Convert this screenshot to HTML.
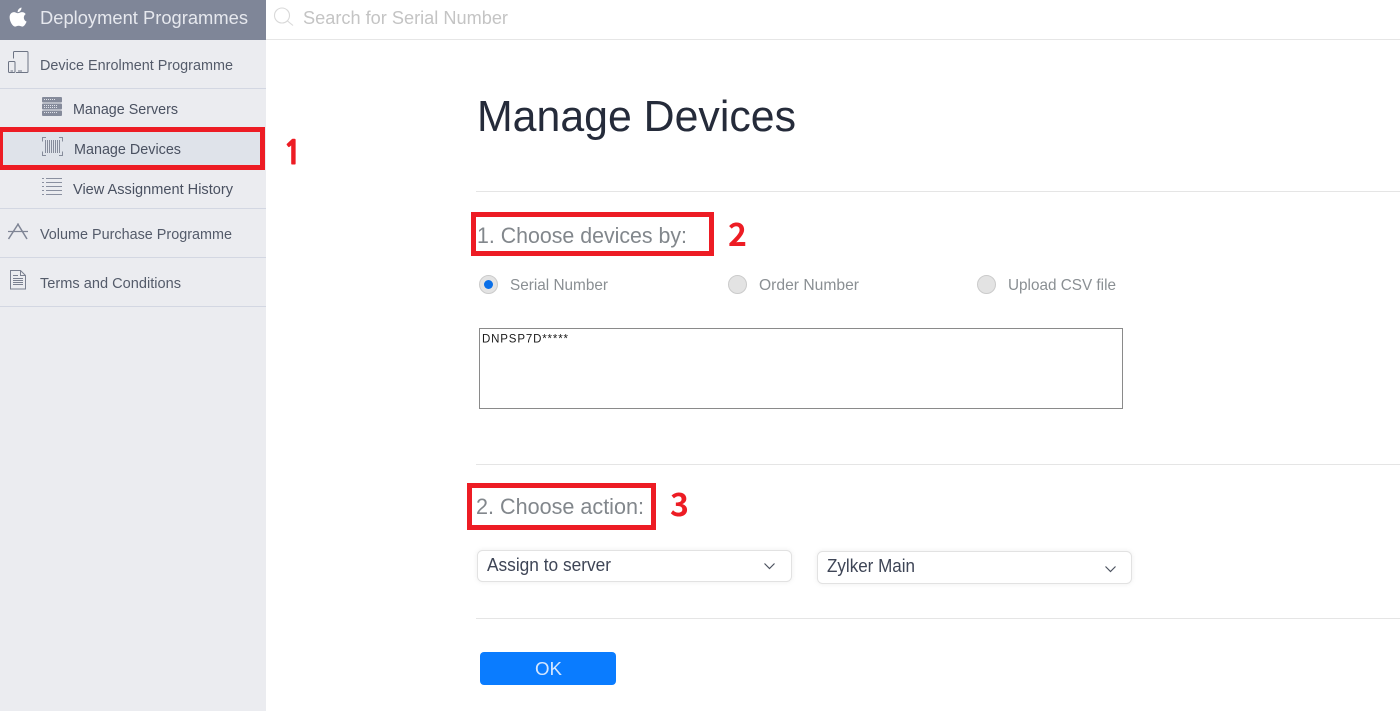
<!DOCTYPE html>
<html lang="en">
<head>
<meta charset="utf-8">
<title>Manage Devices</title>
<style>
html,body{margin:0;padding:0;background:#fff;width:1400px;height:711px;overflow:hidden}
svg{display:block}
text{font-family:"Liberation Sans",Arial,sans-serif;white-space:pre}
.nav{font-size:15px;fill:#545b6a}
.sub{font-size:15px;fill:#4a5161}
.h{font-size:22px;fill:#82878c}
.r{font-size:16px;fill:#8a8f93}
.sel{font-size:18px;fill:#3e4556}
.num{font-family:"Noto Sans CJK SC","Liberation Sans",sans-serif;font-weight:700;font-size:32px;fill:#ed1c24}
</style>
</head>
<body>
<svg width="1400" height="711" viewBox="0 0 1400 711" xmlns="http://www.w3.org/2000/svg">
<rect width="1400" height="711" fill="#fff"/>
<!-- sidebar -->
<rect x="0" y="0" width="266" height="711" fill="#ebecf0"/>
<rect x="0" y="0" width="266" height="40" fill="#7f8698"/>
<rect x="0" y="130" width="262" height="38" fill="#dfe3ea"/>
<g fill="#d3d7e2">
<rect x="0" y="88" width="266" height="1"/>
<rect x="0" y="208" width="266" height="1"/>
<rect x="0" y="257" width="266" height="1"/>
<rect x="0" y="306" width="266" height="1"/>
</g>
<!-- apple logo -->
<path d="M17.900 13.200c1.300 0 2.500-1.100 4-1.100 1.700 0 3 .8 3.800 2-2.800 1.800-2.400 6.200.9 7.500-.8 2-2.400 5-4.400 5-1.200 0-2-.8-3.500-.8-1.600 0-2.300.8-3.500.8-2.600 0-5.600-5.100-5.600-9.300 0-3.400 2.200-5.200 4.400-5.200 1.300 0 2.500 1.100 3.900 1.100zM17.600 12.300c-.1-2.200 1.600-4.400 3.900-4.800.2 2.400-1.800 4.700-3.900 4.800z" fill="#fff"/>
<text x="40" y="24" font-size="18" fill="#e6e8ee" textLength="208" lengthAdjust="spacingAndGlyphs">Deployment Programmes</text>
<!-- device icon -->
<g fill="none" stroke="#6d7484" stroke-width="1">
<path d="M13.500 58.500v-6a1 1 0 0 1 1-1h12.500a1 1 0 0 1 1 1v19a1 1 0 0 1-1 1h-11"/>
<rect x="8.500" y="61.500" width="6.500" height="11" rx="1"/>
</g>
<rect x="10.500" y="70.500" width="2.500" height="1" fill="#6d7484"/><rect x="18" y="70.500" width="4" height="1" fill="#6d7484"/>
<text class="nav" x="40" y="70" textLength="193" lengthAdjust="spacingAndGlyphs">Device Enrolment Programme</text>
<!-- server icon -->
<g fill="#858b9b">
<rect x="42" y="97" width="20" height="5.500" rx="1"/>
<rect x="42" y="103.500" width="20" height="6" rx="1"/>
<rect x="42" y="110.500" width="20" height="5.500" rx="1"/>
</g>
<g stroke="#e0e3ea" stroke-width="1" stroke-dasharray="1 1" fill="none">
<path d="M44 99.500h12M44 105.500h14M44 107.500h14M44 112.500h14"/>
</g>
<text class="sub" x="73" y="114" textLength="105" lengthAdjust="spacingAndGlyphs">Manage Servers</text>
<!-- barcode icon -->
<g fill="none" stroke="#868c9b" stroke-width="1">
<path d="M46 137.500h-3.500v4M59 137.500h3.500v4M46 155.500h-3.500v-4M59 155.500h3.500v-4"/>
<path d="M45.500 140v13M47.500 140v13M49.500 140v13M51.500 140v13M53.500 140v13M55.500 140v13M57.500 140v13M59.500 140v13"/>
</g>
<text class="sub" x="74" y="154" textLength="107" lengthAdjust="spacingAndGlyphs">Manage Devices</text>
<!-- list icon -->
<g stroke="#8a90a0" stroke-width="1" fill="none">
<path d="M46 178.500h16M46 182.500h16M46 186.500h16M46 190.500h16M46 194.500h16"/>
<path d="M42 178.500h2M42 182.500h2M42 186.500h2M42 190.500h2M42 194.500h2"/>
</g>
<text class="sub" x="73" y="194" textLength="160" lengthAdjust="spacingAndGlyphs">View Assignment History</text>
<!-- app store icon -->
<g stroke="#7f8595" stroke-width="1.500" fill="none">
<path d="M18.500 223.500l-10 15.500M17.500 223.500l9.500 15.500"/>
<path d="M8 231.500h20" stroke-width="1.200"/>
</g>
<text class="nav" x="40" y="239" textLength="192" lengthAdjust="spacingAndGlyphs">Volume Purchase Programme</text>
<!-- doc icon -->
<g stroke="#7a8090" stroke-width="1" fill="none">
<path d="M10.500 270.500h10l5 5v13.500h-15zM20.500 270.500v5h5"/>
<path d="M13 275.500h5M13 278.500h10M13 280.500h10M13 282.500h10M13 284.500h10"/>
</g>
<text class="nav" x="40" y="288" textLength="141" lengthAdjust="spacingAndGlyphs">Terms and Conditions</text>
<!-- search bar -->
<rect x="266" y="39" width="1134" height="1" fill="#e6e6e6"/>
<g fill="none" stroke="#d9d9d9" stroke-width="1.100">
<circle cx="282" cy="15.500" r="7.500"/>
<path d="M287.500 21l5.500 4.500"/>
</g>
<text x="303" y="24" font-size="18" fill="#c4c4c4" textLength="205" lengthAdjust="spacingAndGlyphs">Search for Serial Number</text>
<!-- main -->
<text x="477" y="131" font-size="44" fill="#252b3a" textLength="319" lengthAdjust="spacingAndGlyphs">Manage Devices</text>
<g fill="#e5e5e5">
<rect x="476" y="191" width="924" height="1"/>
<rect x="476" y="464" width="924" height="1"/>
<rect x="476" y="618" width="924" height="1"/>
</g>
<text class="h" x="477" y="243" textLength="210" lengthAdjust="spacingAndGlyphs">1. Choose devices by:</text>
<!-- radios -->
<g fill="#e3e3e3" stroke="#cbcbcb" stroke-width="1">
<circle cx="488.500" cy="284.500" r="9"/>
<circle cx="737.500" cy="284.500" r="9"/>
<circle cx="986.500" cy="284.500" r="9"/>
</g>
<circle cx="488.500" cy="284.500" r="4.500" fill="#0a6fe8"/>
<text class="r" x="510" y="290" textLength="98" lengthAdjust="spacingAndGlyphs">Serial Number</text>
<text class="r" x="759" y="290" textLength="100" lengthAdjust="spacingAndGlyphs">Order Number</text>
<text class="r" x="1008" y="290" textLength="108" lengthAdjust="spacingAndGlyphs">Upload CSV file</text>
<!-- textarea -->
<rect x="479.500" y="328.500" width="643" height="80" fill="#fff" stroke="#8a8a8a" stroke-width="1"/>
<text x="482" y="342.500" font-size="11.500" fill="#1a1a1a" textLength="86" lengthAdjust="spacing">DNPSP7D*****</text>
<text class="h" x="476" y="514" textLength="168" lengthAdjust="spacingAndGlyphs">2. Choose action:</text>
<!-- selects -->
<defs>
<filter id="s" x="-5%" y="-30%" width="110%" height="160%"><feDropShadow dx="0" dy="0" stdDeviation="2.500" flood-color="#000" flood-opacity=".07"/></filter>
</defs>
<rect x="477.500" y="550.500" width="314" height="31" rx="5" fill="#fff" stroke="#e2e2e2" filter="url(#s)"/>
<text class="sel" x="487" y="571" textLength="124" lengthAdjust="spacingAndGlyphs">Assign to server</text>
<path d="M764.500 563.500l5 5 5-5" fill="none" stroke="#4d5360" stroke-width="1.200"/>
<rect x="817.500" y="551.500" width="314" height="32" rx="5" fill="#fff" stroke="#e2e2e2" filter="url(#s)"/>
<text class="sel" x="827" y="572" textLength="88" lengthAdjust="spacingAndGlyphs">Zylker Main</text>
<path d="M1105.500 566.500l5 5 5-5" fill="none" stroke="#4d5360" stroke-width="1.200"/>
<!-- OK -->
<rect x="480" y="652" width="136" height="33" rx="4" fill="#0a7cff"/>
<text x="535" y="675" font-size="18" fill="#d4e6ff" textLength="27" lengthAdjust="spacingAndGlyphs">OK</text>
<!-- red annotations -->
<g fill="none" stroke="#ed1c24" stroke-width="5">
<rect x="0.500" y="129.500" width="262" height="38"/>
<rect x="473.500" y="214.500" width="238" height="39"/>
<rect x="469.500" y="485.500" width="184" height="42"/>
</g>
<text class="num" x="283" y="164" stroke="#ed1c24" stroke-width="1" style="font-family:'NanumGothic','Noto Sans CJK SC',sans-serif">1</text>
<text class="num" x="728" y="246">2</text>
<text class="num" x="670" y="516">3</text>
</svg>
</body>
</html>
